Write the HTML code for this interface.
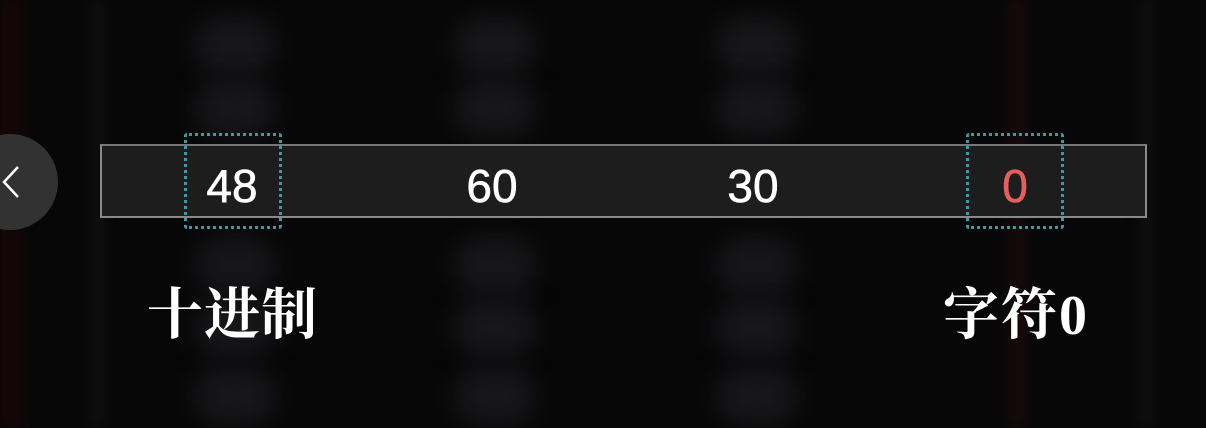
<!DOCTYPE html>
<html><head><meta charset="utf-8"><style>
html,body{margin:0;padding:0;}
body{width:1206px;height:428px;background:#070708;position:relative;overflow:hidden;font-family:"Liberation Sans",sans-serif;}
.blob{position:absolute;width:80px;height:56px;background:#171719;border-radius:24px;filter:blur(12px);}
.col{position:absolute;top:0;height:428px;filter:blur(6px);}
.bar{position:absolute;left:100px;top:144px;width:1043px;height:70px;background:#1e1d1e;border:2px solid #8a8a8a;border-top-color:#777;}
.num{position:absolute;top:157px;font-size:46px;color:#fff;width:120px;text-align:center;line-height:58px;-webkit-text-stroke:0.6px #fff;}
.box{position:absolute;top:133px;width:92px;height:90px;border:3px dotted #3a9c9e;border-radius:3px;}
.lbl{position:absolute;top:284px;font-family:"Liberation Serif","Noto Serif CJK SC",serif;font-weight:bold;font-size:56px;color:#fff;line-height:64px;}
.back{position:absolute;left:-38px;top:134px;width:96px;height:96px;border-radius:50%;background:#323232;}
</style></head><body>
<div class="col" style="left:0;width:22px;background:#160606;"></div>
<div class="col" style="left:92px;width:12px;background:#101011;"></div>
<div class="col" style="left:1008px;width:18px;background:#180a0b;"></div>
<div class="col" style="left:1140px;width:14px;background:#101011;"></div>

<div class="blob" style="left:195px;top:18px"></div>
<div class="blob" style="left:195px;top:80px"></div>
<div class="blob" style="left:195px;top:238px"></div>
<div class="blob" style="left:195px;top:300px"></div>
<div class="blob" style="left:195px;top:368px"></div>
<div class="blob" style="left:455px;top:18px"></div>
<div class="blob" style="left:455px;top:80px"></div>
<div class="blob" style="left:455px;top:238px"></div>
<div class="blob" style="left:455px;top:300px"></div>
<div class="blob" style="left:455px;top:368px"></div>
<div class="blob" style="left:717px;top:18px"></div>
<div class="blob" style="left:717px;top:80px"></div>
<div class="blob" style="left:717px;top:238px"></div>
<div class="blob" style="left:717px;top:300px"></div>
<div class="blob" style="left:717px;top:368px"></div>

<div class="bar"></div>
<div class="num" style="left:172px">48</div>
<div class="num" style="left:432px">60</div>
<div class="num" style="left:693px">30</div>
<div class="num" style="left:955px;color:#e4605f;-webkit-text-stroke:0.6px #e4605f">0</div>
<div class="box" style="left:184px"></div>
<div class="box" style="left:966px"></div>

<div class="lbl" style="left:147px;letter-spacing:1px">十进制</div>
<div class="lbl" style="left:943px;letter-spacing:2px">字符0</div>

<div class="back"></div>
<svg style="position:absolute;left:0;top:164px" width="24" height="36" viewBox="0 0 24 36"><path d="M18 3 L4 18 L18 33" fill="none" stroke="#fff" stroke-width="2.5"/></svg>
</body></html>
